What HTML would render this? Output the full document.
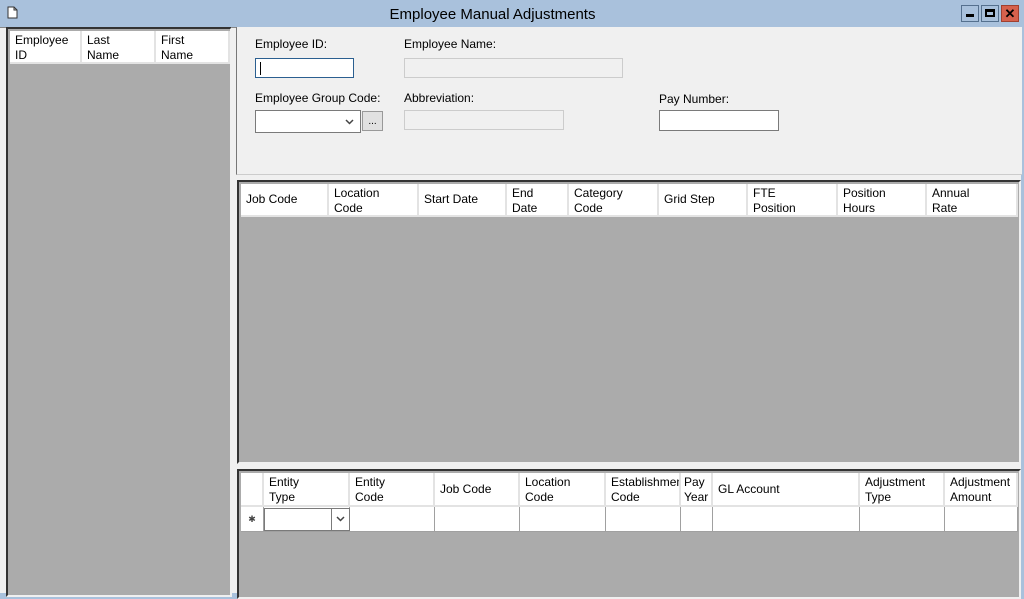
<!DOCTYPE html><html><head><style>
*{margin:0;padding:0;box-sizing:border-box}
body{width:1024px;height:593px;overflow:hidden;background:#a9c1dc;font-family:"Liberation Sans",Arial,sans-serif;font-size:12px;color:#000;position:relative}
.a{position:absolute}
.grid{position:absolute;background:#ababab;border:2px solid #333;border-right-color:#f0f0f0;border-bottom-color:#f0f0f0}
.hc{position:absolute;background:#fff;border-right:2px solid #e3e3e3;border-bottom:2px solid #e3e3e3;padding:2px 5px;line-height:15px;overflow:hidden;white-space:nowrap}
.hc.m{display:flex;align-items:center}
.rc{position:absolute;background:#fff;border-right:1px solid #a0a0a0;border-bottom:1px solid #a0a0a0;height:25px}
.lbl{position:absolute;font-size:12px}
.tb{position:absolute;background:#fff;border:1px solid #7a7a7a}
.dis{position:absolute;background:#f0f0f0;border:1px solid #ccc}
</style></head><body>
<svg class="a" style="left:7px;top:6px" width="11" height="13"><path d="M1 1h6l3 3v8H1z" fill="#fff" stroke="#333"/><path d="M7 1v3h3" fill="none" stroke="#333"/></svg>
<div class="a" style="left:0;width:985px;top:6px;text-align:center;font-size:15px">Employee Manual Adjustments</div>
<div class="a" style="left:961px;top:5px;width:18px;height:17px;border:1px solid #55708e;background:#a9c1dc"><div class="a" style="left:4px;top:8px;width:8px;height:3px;background:#000"></div></div>
<div class="a" style="left:981px;top:5px;width:18px;height:17px;border:1px solid #55708e;background:#a9c1dc"><div class="a" style="left:3px;top:3px;width:10px;height:8px;border:2px solid #000;border-top-width:3px"></div></div>
<div class="a" style="left:1001px;top:5px;width:18px;height:17px;border:1px solid #a04030;background:#d6614d;font-weight:bold;font-size:13px;text-align:center;line-height:15px">✕</div>
<div class="a" style="left:0;top:27px;width:1021px;height:566px;background:#f0f0f0;border-top:1px solid #888"></div>
<div class="grid" style="left:6px;top:27px;width:226px;height:570px">
<div class="hc" style="left:2px;top:2px;width:72px;height:33px">Employee<br>ID</div>
<div class="hc" style="left:74px;top:2px;width:74px;height:33px">Last<br>Name</div>
<div class="hc" style="left:148px;top:2px;width:74px;height:33px">First<br>Name</div>
</div>
<div class="a" style="left:236px;top:27px;width:786px;height:148px;border-left:1px solid #777;border-bottom:1px solid #ccc;background:#f0f0f0"></div>
<div class="lbl" style="left:255px;top:37px">Employee ID:</div>
<div class="tb" style="left:255px;top:58px;width:99px;height:20px;border-color:#2b5f90"><div class="a" style="left:4px;top:3px;width:1px;height:13px;background:#000"></div></div>
<div class="lbl" style="left:404px;top:37px">Employee Name:</div>
<div class="dis" style="left:404px;top:58px;width:219px;height:20px"></div>
<div class="lbl" style="left:255px;top:91px">Employee Group Code:</div>
<div class="tb" style="left:255px;top:110px;width:106px;height:23px"><svg class="a" style="left:89px;top:8px" width="9" height="6"><path d="M1 1l3.5 3.5L8 1" fill="none" stroke="#444" stroke-width="1.5"/></svg></div>
<div class="a" style="left:362px;top:111px;width:21px;height:20px;background:#e1e1e1;border:1px solid #999;text-align:center;font-size:10px;line-height:20px">...</div>
<div class="lbl" style="left:404px;top:91px">Abbreviation:</div>
<div class="dis" style="left:404px;top:110px;width:160px;height:20px"></div>
<div class="lbl" style="left:659px;top:92px">Pay Number:</div>
<div class="tb" style="left:659px;top:110px;width:120px;height:21px"></div>
<div class="grid" style="left:237px;top:180px;width:784px;height:284px">
<div class="hc m" style="left:2px;top:2px;width:88px;height:33px">Job Code</div>
<div class="hc" style="left:90px;top:2px;width:90px;height:33px">Location<br>Code</div>
<div class="hc m" style="left:180px;top:2px;width:88px;height:33px">Start Date</div>
<div class="hc" style="left:268px;top:2px;width:62px;height:33px">End<br>Date</div>
<div class="hc" style="left:330px;top:2px;width:90px;height:33px">Category<br>Code</div>
<div class="hc m" style="left:420px;top:2px;width:89px;height:33px">Grid Step</div>
<div class="hc" style="left:509px;top:2px;width:90px;height:33px">FTE<br>Position</div>
<div class="hc" style="left:599px;top:2px;width:89px;height:33px">Position<br>Hours</div>
<div class="hc" style="left:688px;top:2px;width:91px;height:33px">Annual<br>Rate</div>
</div>
<div class="grid" style="left:237px;top:469px;width:784px;height:130px">
<div class="hc" style="left:2px;top:2px;width:23px;height:34px"></div>
<div class="hc" style="left:25px;top:2px;width:86px;height:34px">Entity<br>Type</div>
<div class="hc" style="left:111px;top:2px;width:85px;height:34px">Entity<br>Code</div>
<div class="hc m" style="left:196px;top:2px;width:85px;height:34px">Job Code</div>
<div class="hc" style="left:281px;top:2px;width:86px;height:34px">Location<br>Code</div>
<div class="hc" style="left:367px;top:2px;width:75px;height:34px">Establishment<br>Code</div>
<div class="hc" style="left:442px;top:2px;width:32px;height:34px;padding-left:3px">Pay<br>Year</div>
<div class="hc m" style="left:474px;top:2px;width:147px;height:34px">GL Account</div>
<div class="hc" style="left:621px;top:2px;width:85px;height:34px">Adjustment<br>Type</div>
<div class="hc" style="left:706px;top:2px;width:73px;height:34px">Adjustment<br>Amount</div>
<div class="rc" style="left:2px;top:36px;width:23px;background:#fff;text-align:center;line-height:24px;font-size:9px;color:#444">✱</div>
<div class="rc" style="left:25px;top:36px;width:86px"><div class="a" style="left:0;top:1px;width:86px;height:23px;border:1px solid #7a7a7a"></div><div class="a" style="left:67px;top:1px;width:1px;height:23px;background:#7a7a7a"></div><svg class="a" style="left:72px;top:9px" width="9" height="6"><path d="M1 1l3.5 3.5L8 1" fill="none" stroke="#444" stroke-width="1.5"/></svg></div>
<div class="rc" style="left:111px;top:36px;width:85px"></div>
<div class="rc" style="left:196px;top:36px;width:85px"></div>
<div class="rc" style="left:281px;top:36px;width:86px"></div>
<div class="rc" style="left:367px;top:36px;width:75px"></div>
<div class="rc" style="left:442px;top:36px;width:32px"></div>
<div class="rc" style="left:474px;top:36px;width:147px"></div>
<div class="rc" style="left:621px;top:36px;width:85px"></div>
<div class="rc" style="left:706px;top:36px;width:73px"></div>
</div>
</body></html>
